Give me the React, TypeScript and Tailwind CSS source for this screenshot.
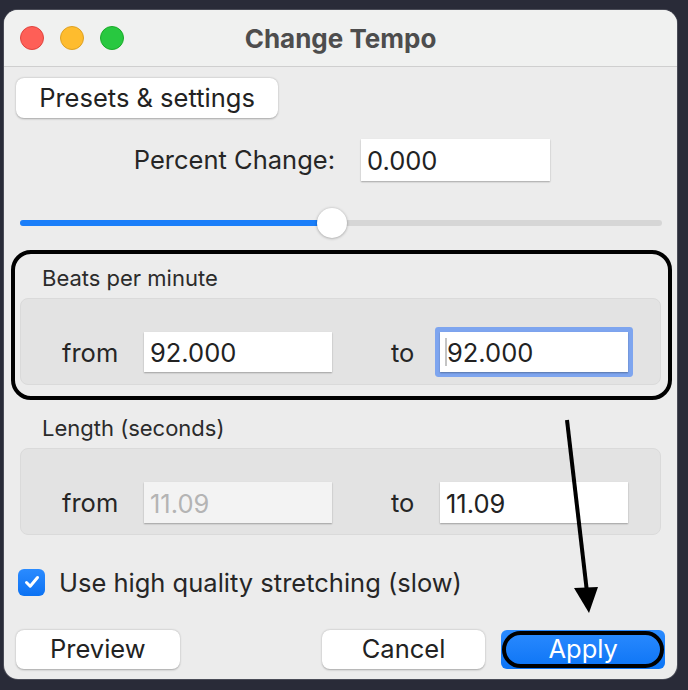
import React from 'react';

function Field({ value, disabled, className = '' }: { value: string; disabled?: boolean; className?: string }) {
  return (
    <div
      className={
        'flex items-center pl-[6px] pt-[3px] text-[25.5px] shadow-[0_1px_1.5px_rgba(0,0,0,0.3)] ' +
        (disabled ? 'bg-[#f3f3f3] text-[#b4b4b4] ' : 'bg-white text-[#222] ') +
        className
      }
    >
      {value}
    </div>
  );
}

function PushButton({ children, className = '' }: { children: React.ReactNode; className?: string }) {
  return (
    <button
      className={
        'flex h-[39px] w-[164px] items-center justify-center rounded-[8px] bg-white text-[25.5px] text-[#222] shadow-[0_0.5px_2px_rgba(0,0,0,0.3)] ' +
        className
      }
    >
      {children}
    </button>
  );
}

export default function App() {
  return (
    <div className="relative h-[690px] w-[688px] overflow-hidden bg-[#292b38] pl-[4px] pt-[10px] font-['Inter',sans-serif]">
      <div className="flex h-[669px] w-[673px] flex-col overflow-hidden rounded-[14px] bg-[#ececec] shadow-[0_0_0_1px_#4a4c57]">
        {/* title bar */}
        <div className="grid h-[57px] shrink-0 grid-cols-[1fr_auto_1fr] items-center border-b border-[#cfcfcf] bg-[#f0f1f0]">
          <div className="flex gap-[16px] pl-[16px]">
            <span className="h-[24px] w-[24px] rounded-full border border-[#e0443e] bg-[#fe5f57]" />
            <span className="h-[24px] w-[24px] rounded-full border border-[#dea123] bg-[#febc2e]" />
            <span className="h-[24px] w-[24px] rounded-full border border-[#1aab29] bg-[#28c840]" />
          </div>
          <div className="text-[26px] font-bold text-[#4d4d4d]">Change Tempo</div>
          <div />
        </div>

        <div className="flex flex-col px-[12px] text-[#262626]">
          <PushButton className="mt-[11px] h-[40px] w-[262px]">Presets &amp; settings</PushButton>

          <div className="mt-[21px] flex h-[42px] items-center">
            <span className="w-[319px] text-right text-[25.5px]">Percent Change:</span>
            <Field value="0.000" className="ml-[26px] h-[42px] w-[189px]" />
          </div>

          {/* slider */}
          <div className="relative ml-[4px] mt-[27px] h-[30px] w-[642px]">
            <div className="absolute left-0 right-0 top-[12px] h-[6px] rounded-full bg-[#d6d6d6]" />
            <div className="absolute left-0 top-[12px] h-[6px] w-[312px] rounded-full bg-[#1a7ef9]" />
            <div className="absolute left-[297px] top-0 h-[30px] w-[30px] rounded-full bg-white shadow-[0_0.5px_3px_rgba(0,0,0,0.35)]" />
          </div>

          {/* Beats per minute (annotated) */}
          <div className="-ml-[5px] -mr-[7px] mt-[12px] rounded-[20px] border-[4px] border-black pb-[11px] pl-[5px] pr-[7px] pt-[12px]">
            <div className="h-[24px] pl-[22px] text-[22px] leading-[24px] text-[#2b2b2b]">Beats per minute</div>
            <div className="mt-[8px] flex h-[87px] items-start rounded-[8px] border border-[#dadada] bg-[#e3e3e3] pl-[41px] pt-[33px]">
              <span className="flex h-[40px] w-[82px] items-center pt-[2px] text-[25.5px]">from</span>
              <Field value="92.000" className="h-[40px] w-[188px]" />
              <span className="ml-[59px] flex h-[40px] w-[49px] items-center pt-[2px] text-[25.5px]">to</span>
              <div className="relative h-[40px] w-[188px] rounded-[1px] ring-[5px] ring-[#7ea5ef]">
                <Field value="92.000" className="h-[40px] w-[188px] !pl-[7px]" />
                <span className="absolute left-[5px] top-[6px] h-[28px] w-[2px] bg-[#c4c4c4]" />
              </div>
            </div>
          </div>

          {/* Length */}
          <div className="mt-[16px] h-[24px] pl-[26px] text-[22px] leading-[24px] text-[#2b2b2b]">Length (seconds)</div>
          <div className="mx-[4px] mt-[8px] flex h-[87px] items-start rounded-[8px] border border-[#dadada] bg-[#e3e3e3] pl-[41px] pt-[33px]">
            <span className="flex h-[41px] w-[82px] items-center pt-[2px] text-[25.5px]">from</span>
            <Field value="11.09" disabled className="h-[41px] w-[188px]" />
            <span className="ml-[59px] flex h-[41px] w-[49px] items-center pt-[2px] text-[25.5px]">to</span>
            <Field value="11.09" className="h-[41px] w-[188px]" />
          </div>

          {/* checkbox */}
          <div className="mt-[33px] flex h-[28px] items-center pl-[2px]">
            <span className="flex h-[27px] w-[27px] items-center justify-center rounded-[6px] bg-gradient-to-b from-[#2a8bff] to-[#0a72f3]">
              <svg width="18" height="18" viewBox="0 0 18 18" fill="none">
                <path d="M3.5 9.5 L7.2 13.2 L14.5 4.5" stroke="white" strokeWidth="3" strokeLinecap="round" strokeLinejoin="round" />
              </svg>
            </span>
            <span className="ml-[14px] pt-[2px] text-[25.5px]">Use high quality stretching (slow)</span>
          </div>

          {/* buttons */}
          <div className="mt-[34px] flex h-[39px]">
            <PushButton>Preview</PushButton>
            <PushButton className="ml-[142px]">Cancel</PushButton>
            <button className="ml-[16px] h-[39px] w-[164px] rounded-[6px] bg-gradient-to-b from-[#2a8bff] to-[#0a74f5] p-[1px]">
              <div className="flex h-full w-full items-center justify-center rounded-full border-[4px] border-black text-[25.5px] text-white">
                Apply
              </div>
            </button>
          </div>
        </div>
      </div>

      {/* annotation arrow */}
      <svg className="pointer-events-none absolute left-0 top-0" width="688" height="690" viewBox="0 0 688 690">
        <line x1="567" y1="420" x2="587" y2="592" stroke="black" strokeWidth="4" />
        <polygon points="574,588 598,587 589,613" fill="black" />
      </svg>
    </div>
  );
}
